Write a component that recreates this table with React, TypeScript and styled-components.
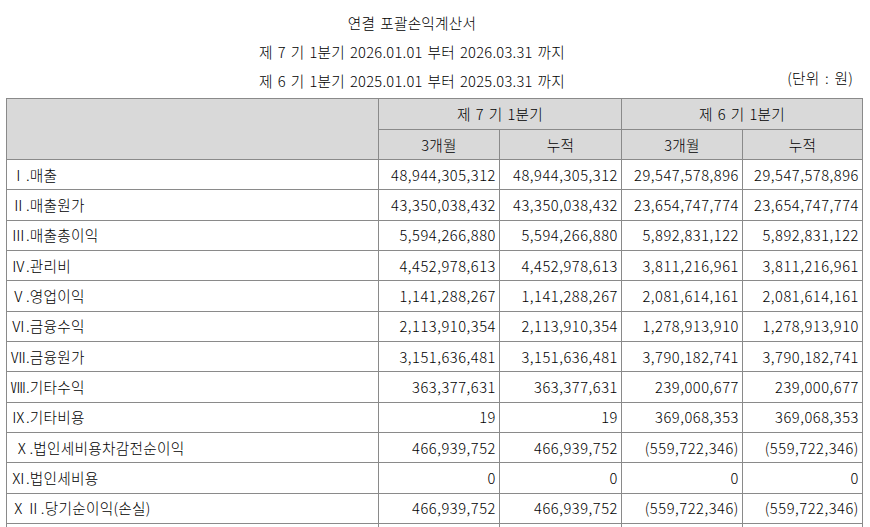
import React from "react";
import styled, { createGlobalStyle } from "styled-components";

const Global = createGlobalStyle`
  html, body { margin: 0; padding: 0; background: #fff; }
  body {
    font-family: "Noto Sans CJK KR", "Noto Sans", sans-serif;
    font-weight: 300;
    color: #000;
    overflow: hidden;
  }
`;

const Page = styled.div`
  width: 870px;
  height: 527px;
  overflow: hidden;
  font-size: 14.67px;
  letter-spacing: 0.25px;
`;

const Titles = styled.div`
  padding: 8px 46px 0 0;
  word-spacing: 1.5px;
`;

const TitleLine = styled.div`
  height: 29px;
  line-height: 29px;
  text-align: center;
  white-space: nowrap;
`;

const TitleGrid = styled.div`
  display: grid;
  grid-template-columns: minmax(0, 1fr) auto minmax(0, 1fr);
  height: 29px;
  line-height: 29px;
  white-space: nowrap;
`;

const TitleCenter = styled.div`
  grid-column: 2;
`;

const Unit = styled.div`
  grid-column: 3;
  justify-self: end;
  align-self: start;
  line-height: 23px;
  margin-right: -29px;
  word-spacing: 2px;
`;

const Table = styled.table`
  margin: 3px 0 0 6px;
  width: 856px;
  table-layout: fixed;
  border-collapse: collapse;
  border: 1px solid #000;
`;

const HeadCell = styled.th<{ $h: number }>`
  background: #d9d9d9;
  border: 1px solid #8a8a8a;
  font-weight: 300;
  height: ${(p) => p.$h}px;
  padding: 0;
  line-height: 18px;
  text-align: center;
  white-space: nowrap;
  word-spacing: 1.5px;
`;

const Row = styled.tr`
  height: 30.33px;
`;

const Label = styled.td`
  border: 1px solid #8a8a8a;
  padding: 0 0 0 4px;
  line-height: 18px;
  white-space: nowrap;
  text-align: left;
`;

const Num = styled.td`
  border: 1px solid #8a8a8a;
  padding: 0 3px 0 0;
  line-height: 18px;
  white-space: nowrap;
  text-align: right;
  letter-spacing: 0.55px;
`;

type RowData = [string, string, string, string, string];

const rows: RowData[] = [
  ["Ⅰ.매출", "48,944,305,312", "48,944,305,312", "29,547,578,896", "29,547,578,896"],
  ["Ⅱ.매출원가", "43,350,038,432", "43,350,038,432", "23,654,747,774", "23,654,747,774"],
  ["Ⅲ.매출총이익", "5,594,266,880", "5,594,266,880", "5,892,831,122", "5,892,831,122"],
  ["Ⅳ.관리비", "4,452,978,613", "4,452,978,613", "3,811,216,961", "3,811,216,961"],
  ["Ⅴ.영업이익", "1,141,288,267", "1,141,288,267", "2,081,614,161", "2,081,614,161"],
  ["Ⅵ.금융수익", "2,113,910,354", "2,113,910,354", "1,278,913,910", "1,278,913,910"],
  ["Ⅶ.금융원가", "3,151,636,481", "3,151,636,481", "3,790,182,741", "3,790,182,741"],
  ["Ⅷ.기타수익", "363,377,631", "363,377,631", "239,000,677", "239,000,677"],
  ["Ⅸ.기타비용", "19", "19", "369,068,353", "369,068,353"],
  ["\u00a0Ⅹ.법인세비용차감전순이익", "466,939,752", "466,939,752", "(559,722,346)", "(559,722,346)"],
  ["Ⅺ.법인세비용", "0", "0", "0", "0"],
  ["ⅩⅡ.당기순이익(손실)", "466,939,752", "466,939,752", "(559,722,346)", "(559,722,346)"],
  ["", "", "", "", ""],
];

export default function App() {
  return (
    <Page>
      <Global />
      <Titles>
        <TitleLine>연결 포괄손익계산서</TitleLine>
        <TitleLine>제 7 기 1분기 2026.01.01 부터 2026.03.31 까지</TitleLine>
        <TitleGrid>
          <TitleCenter>제 6 기 1분기 2025.01.01 부터 2025.03.31 까지</TitleCenter>
          <Unit>(단위 : 원)</Unit>
        </TitleGrid>
      </Titles>
      <Table>
        <colgroup>
          <col style={{ width: 372 }} />
          <col style={{ width: 121 }} />
          <col style={{ width: 122 }} />
          <col style={{ width: 121 }} />
          <col style={{ width: 120 }} />
        </colgroup>
        <thead>
          <tr>
            <HeadCell $h={30} rowSpan={2} />
            <HeadCell $h={30} colSpan={2}>제 7 기 1분기</HeadCell>
            <HeadCell $h={30} colSpan={2}>제 6 기 1분기</HeadCell>
          </tr>
          <tr>
            <HeadCell $h={29}>3개월</HeadCell>
            <HeadCell $h={29}>누적</HeadCell>
            <HeadCell $h={29}>3개월</HeadCell>
            <HeadCell $h={29}>누적</HeadCell>
          </tr>
        </thead>
        <tbody>
          {rows.map((r, i) => (
            <Row key={i}>
              <Label>{r[0]}</Label>
              <Num>{r[1]}</Num>
              <Num>{r[2]}</Num>
              <Num>{r[3]}</Num>
              <Num>{r[4]}</Num>
            </Row>
          ))}
        </tbody>
      </Table>
    </Page>
  );
}
